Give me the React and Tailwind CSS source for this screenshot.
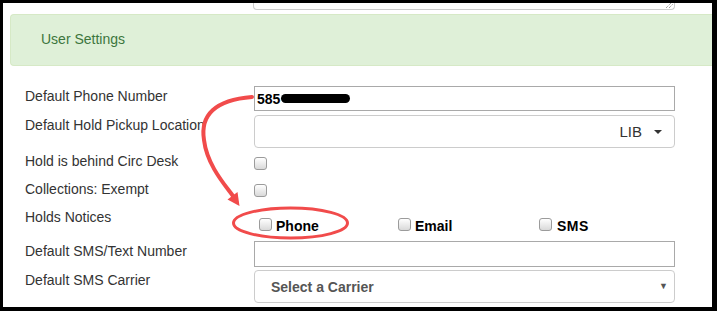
import React from "react";

const font = { fontFamily: '"Liberation Sans", Arial, sans-serif' };

function Check({ className = "" }) {
  return (
    <span
      className={
        "block w-[13px] h-[13px] rounded-[3px] border border-[#9b9b9b] bg-gradient-to-b from-[#ffffff] to-[#d9d9d9] shrink-0 " +
        className
      }
    />
  );
}

function Row({ label, h, mt = "mt-0", pt = "pt-[1px]", children }) {
  return (
    <div className={"flex " + h + " " + mt}>
      <div className={"w-[251px] shrink-0 pl-[22px] text-[14px] leading-[18px] text-[#333] whitespace-nowrap " + pt}>{label}</div>
      <div className="w-[421px] shrink-0">{children}</div>
    </div>
  );
}

export default function App() {
  return (
    <div className="w-[717px] h-[311px] bg-black pt-[3px] pl-[3px] pr-[5px] pb-[4px]" style={font}>
      <div className="relative bg-white w-full h-full overflow-hidden">
        {/* textarea fragment */}
        <div className="ml-[250px] w-[422px] h-[7px] border border-t-0 border-[#cccccc] rounded-b-[4px] relative">
          <svg className="absolute right-[1px] bottom-[1px]" width="8" height="6" viewBox="0 0 8 6">
            <line x1="1" y1="6" x2="7" y2="0" stroke="#555" strokeWidth="0.8" strokeDasharray="1 1" />
            <line x1="4" y1="6" x2="8" y2="2" stroke="#555" strokeWidth="0.8" strokeDasharray="1 1" />
          </svg>
        </div>
        {/* green panel */}
        <div className="mt-[4px] ml-[7px] h-[52px] bg-[#dff0d8] border border-[#d6e9c6] border-r-0 rounded-l-[4px] flex items-center pl-[30px] pb-[1px]">
          <span className="text-[14px] text-[#3c763d]">User Settings</span>
        </div>

        <div className="mt-[20px]">
          <Row label="Default Phone Number" h="h-[25px]">
            <div className="h-[25px] border border-[#a9a9a9] flex items-center pl-[2px]">
              <span className="text-[14px] font-bold text-black leading-none">585</span>
              <span className="block w-[69px] h-[9px] rounded-full bg-black ml-[1px]" />
            </div>
          </Row>
          <Row label="Default Hold Pickup Location" h="h-[33px]" mt="mt-[4px]">
            <div className="h-[33px] border border-[#cccccc] rounded-[4px] flex items-center justify-end pr-[12px] bg-white relative z-0">
              <span className="text-[15px] text-[#333] leading-none">LIB</span>
              <span className="ml-[12px] w-0 h-0 border-x-[4px] border-x-transparent border-t-[4px] border-t-[#333]" />
            </div>
          </Row>
          <Row label="Hold is behind Circ Desk" h="h-[28px]" mt="mt-[4px]" pt="pt-0">
            <Check className="mt-[5px]" />
          </Row>
          <Row label="Collections: Exempt" h="h-[28px]" pt="pt-0">
            <Check className="mt-[4px]" />
          </Row>
          <Row label="Holds Notices" h="h-[33px]" pt="pt-0">
            <div className="grid grid-cols-[139px_141px_120px] ml-[5px] mt-[8px]">
              <div className="flex items-center gap-[4px]">
                <Check />
                <span className="text-[14px] font-bold text-black leading-none mt-[3px]">Phone</span>
              </div>
              <div className="flex items-center gap-[4px]">
                <Check />
                <span className="text-[14px] font-bold text-black leading-none mt-[3px]">Email</span>
              </div>
              <div className="flex items-center gap-[5px]">
                <Check />
                <span className="text-[14px] font-bold text-black leading-none mt-[3px] tracking-[0.5px]">SMS</span>
              </div>
            </div>
          </Row>
          <Row label="Default SMS/Text Number" h="h-[26px]">
            <div className="h-[26px] border border-[#a9a9a9]" />
          </Row>
          <Row label="Default SMS Carrier" h="h-[33px]" mt="mt-[3px]">
            <div className="h-[33px] border border-[#cccccc] rounded-[4px] flex items-center pl-[16px] pr-[6px]">
              <span className="text-[14px] font-bold text-[#555] leading-none">Select a Carrier</span>
              <span className="ml-auto text-[9px] text-[#555] leading-none">▼</span>
            </div>
          </Row>
        </div>

        {/* annotation overlay */}
        <svg className="absolute inset-0 pointer-events-none" width="709" height="304" viewBox="0 0 709 304">
          <path
            d="M249,94 C212,97 197,112 201,137 C204,162 222,182 230,193"
            fill="none"
            stroke="#f14b4b"
            strokeWidth="4"
            strokeLinecap="round"
          />
          <polygon points="236.5,203 224.5,196.5 234.5,189" fill="#f14b4b" />
          <ellipse cx="287.5" cy="220" rx="57" ry="15" fill="none" stroke="#f14b4b" strokeWidth="3" />
        </svg>
      </div>
    </div>
  );
}
